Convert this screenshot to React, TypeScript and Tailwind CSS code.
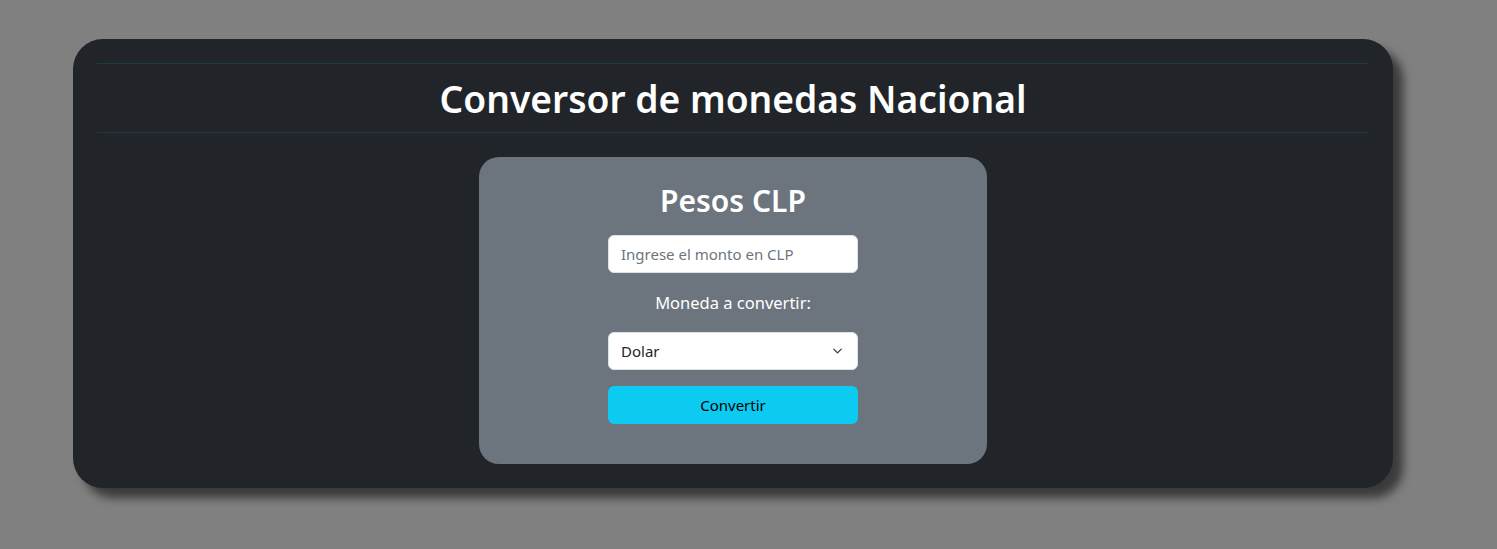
export default function App() {
  return (
    <div className="min-h-[549px] bg-[#808080] pt-[39px] pl-[73px] pr-[104px] font-['Noto_Sans',sans-serif]">
      <div className="rounded-[30px] bg-[#212529] px-6 py-6 shadow-[10px_10px_10px_rgba(0,0,0,0.55)]">
        <div className="border-y border-[#1d3c45]">
          <h1 className="h-[68px] text-center text-[37.2px] font-semibold leading-[70px] text-white">
            Conversor de monedas Nacional
          </h1>
        </div>
        <div className="mt-6 flex justify-center">
          <div className="flex w-[508px] flex-col items-center rounded-[20px] bg-[#6c757d] pt-[26px] pb-10">
            <h2 className="text-[30px] font-semibold leading-[36px] text-white">Pesos CLP</h2>
            <input
              className="mt-4 h-[38px] w-[250px] rounded-md border border-[#dee2e6] bg-white px-3 text-[15px] text-[#212529] placeholder:text-[#6c757d] outline-none"
              placeholder="Ingrese el monto en CLP"
            />
            <p className="mt-[18px] text-[16.5px] leading-6 text-white">Moneda a convertir:</p>
            <div className="relative mt-[17px] w-[250px]">
              <select className="h-[38px] w-full appearance-none rounded-md border border-[#dee2e6] bg-white px-3 text-[15px] text-[#212529] outline-none">
                <option>Dolar</option>
                <option>Euro</option>
                <option>UF</option>
              </select>
              <svg
                className="pointer-events-none absolute right-[14px] top-[14px]"
                width="13"
                height="10"
                viewBox="0 0 16 16"
                fill="none"
                stroke="#343a40"
                strokeWidth="2"
                strokeLinecap="round"
                strokeLinejoin="round"
              >
                <path d="m2 5 6 6 6-6" />
              </svg>
            </div>
            <button className="mt-4 h-[38px] w-[250px] rounded-md bg-[#0dcaf0] text-[15px] text-black">
              Convertir
            </button>
          </div>
        </div>
      </div>
    </div>
  )
}
